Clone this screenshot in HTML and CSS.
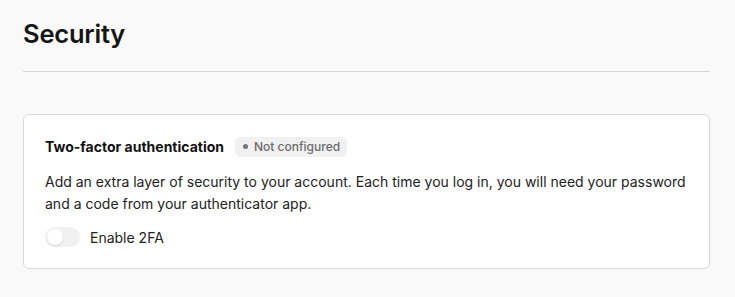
FILE: index.html
```html
<!DOCTYPE html>
<html>
<head>
<meta charset="utf-8">
<link rel="stylesheet" href="styles.css">
</head>
<body>
<main class="page">
  <header class="page-header">
    <h1 class="page-title">Security</h1>
  </header>
  <section class="card">
    <div class="card-head">
      <h2 class="card-title">Two-factor authentication</h2>
      <span class="badge"><span class="badge-dot"></span>Not configured</span>
    </div>
    <p class="card-desc">Add an extra layer of security to your account. Each time you log in, you will need your password and a code from your authenticator app.</p>
    <label class="toggle-row">
      <span class="toggle"><span class="toggle-knob"></span></span>
      <span class="toggle-label">Enable 2FA</span>
    </label>
  </section>
</main>
</body>
</html>
```
FILE: styles.css
```css
* { box-sizing: border-box; }
html, body { margin: 0; padding: 0; }
body {
  background: #f9f9f9;
  font-family: Inter, "Noto Sans", sans-serif;
  color: #1a1a1a;
}
.page {
  padding: 0 25px 0 23px;
}
.page-header {
  padding-top: 17px;
  padding-bottom: 20px;
  border-bottom: 1px solid #d6d6d6;
}
.page-title {
  margin: 0;
  font-size: 25.5px;
  line-height: 34px;
  font-weight: 600;
  letter-spacing: -0.2px;
  color: #151515;
}
.card {
  margin-top: 42px;
  background: #fff;
  border: 1px solid #d9d9d9;
  border-radius: 6px;
  padding: 22px 21px 21px;
}
.card-head {
  display: flex;
  align-items: center;
  gap: 11px;
}
.card-title {
  margin: 0;
  font-size: 14px;
  line-height: 20px;
  font-weight: 700;
  color: #111;
}
.badge {
  display: inline-flex;
  align-items: center;
  gap: 6px;
  height: 20px;
  margin-top: -1px;
  padding: 0 7px 0 8px;
  background: #f1f1f1;
  border-radius: 5px;
  font-size: 12px;
  font-weight: 500;
  color: #6b6b6b;
}
.badge-dot {
  width: 5px;
  height: 5px;
  border-radius: 50%;
  background: #767676;
}
.card-desc {
  margin: 14px 0 0;
  font-size: 14px;
  line-height: 22px;
  color: #222;
}
.toggle-row {
  display: flex;
  align-items: center;
  gap: 10px;
  margin-top: 12px;
  font-size: 14px;
  color: #222;
}
.toggle {
  position: relative;
  width: 35px;
  height: 20px;
  border-radius: 10px;
  background: #f1f1f1;
}
.toggle-knob {
  position: absolute;
  left: 2px;
  top: 2px;
  width: 16px;
  height: 16px;
  border-radius: 50%;
  background: #fff;
  box-shadow: 0 1px 2px rgba(0,0,0,0.12);
}
```
